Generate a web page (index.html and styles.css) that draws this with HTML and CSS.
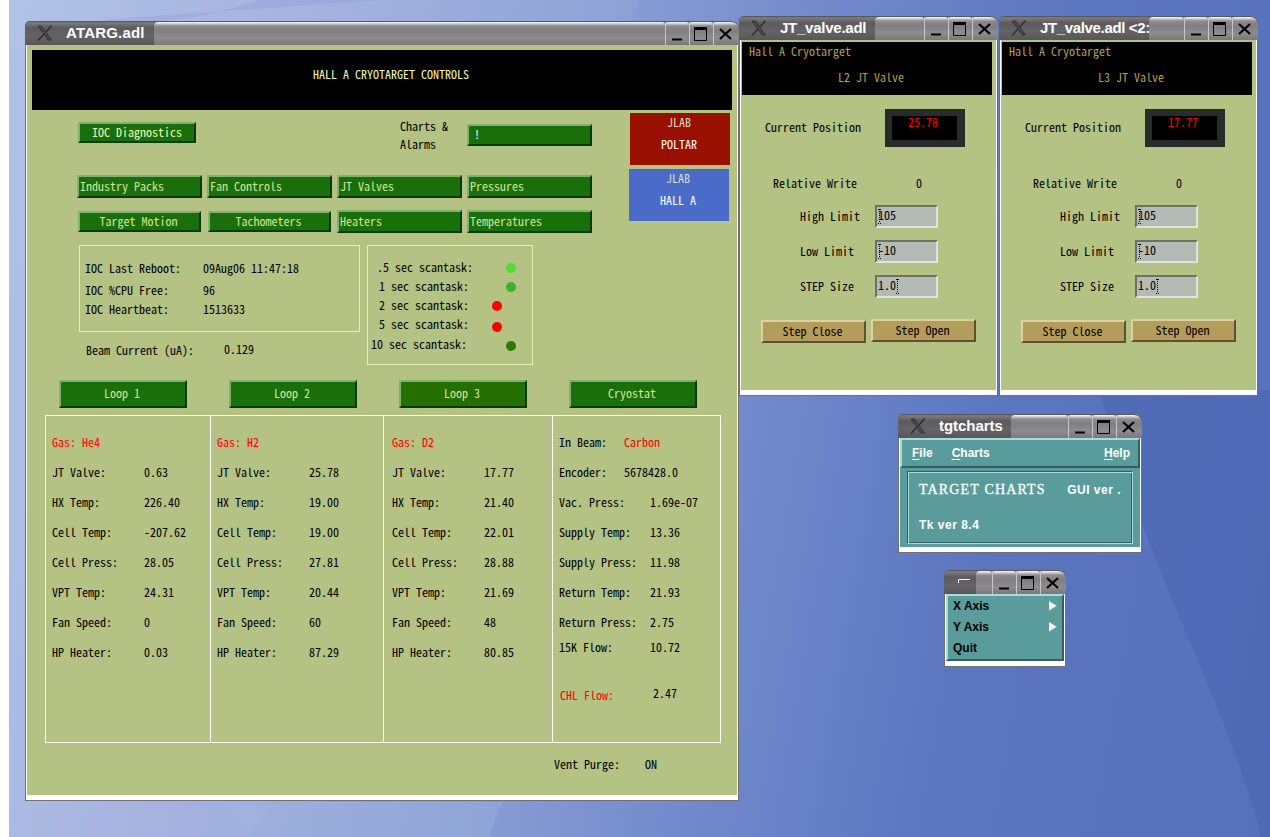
FILE: index.html
```html
<!DOCTYPE html>
<html lang="en">
<head>
    <meta charset="UTF-8">
    <title>Hall A Cryotarget Controls</title>
    <link rel="stylesheet" href="styles.css">
</head>
<body>
    <svg class="symbols" width="0" height="0">
        <symbol id="xlogo" viewBox="0 0 16 16">
            <path d="M1 1h3.500l10 14h-3.500z" fill="#4a484a" stroke="#2c2a2c" stroke-width=".7"/>
            <path d="M14.500 .5L9 7M7 9L1 15.500" stroke="#2c2a2c" stroke-width="1.300"/>
        </symbol>
        <symbol id="min" viewBox="0 0 23 23">
            <path d="M6 17.500h10" stroke="#000" stroke-width="2"/>
        </symbol>
        <symbol id="max" viewBox="0 0 23 23">
            <path d="M4.500 6v12.500h12V6" fill="none" stroke="#000"/>
            <path d="M4 6.500h13" stroke="#000" stroke-width="3"/>
        </symbol>
        <symbol id="close" viewBox="0 0 23 23">
            <path d="M5 7l11 10M16 7L5 17" stroke="#000" stroke-width="2.200"/>
        </symbol>
    </svg>

    <div class="desktop">
        <svg class="wallpaper" viewBox="0 0 1261 837" preserveAspectRatio="none">
            <path d="M630 0Q480 500 240 837H0V0z" fill="#c0c8f0" opacity=".12"/>
            <path d="M370 0H250Q160 30 90 20z" fill="#8890d0" opacity=".25"/>
            <path d="M494 802Q486 820 480 837H240L215 802z" fill="#a8bce4" opacity=".25"/>
            <path d="M1090 390Q1120 500 1180 640T1252 837H1261V390z" fill="#4058a4" opacity=".3"/>
        </svg>

        <!-- main screen -->
        <div class="window win-main">
            <div class="titlebar">
                <div class="title"><svg class="xlogo"><use href="#xlogo"/></svg>ATARG.adl</div>
                <div class="bar"></div>
                <svg class="wbtn"><use href="#min"/></svg>
                <svg class="wbtn"><use href="#max"/></svg>
                <svg class="wbtn last"><use href="#close"/></svg>
            </div>
            <div class="body">
                <div class="banner">HALL A CRYOTARGET CONTROLS</div>

                <div class="upper">
                    <div class="nav">
                        <div class="tools">
                            <div class="btn diag">IOC Diagnostics</div>
                            <div class="charts-label">Charts &amp;<br>Alarms</div>
                            <div class="btn alarm">!</div>
                        </div>
                        <div class="menus">
                            <div class="btn left">Industry Packs</div>
                            <div class="btn left">Fan Controls</div>
                            <div class="btn left">JT Valves</div>
                            <div class="btn left">Pressures</div>
                            <div class="btn small">Target Motion</div>
                            <div class="btn small">Tachometers</div>
                            <div class="btn left">Heaters</div>
                            <div class="btn left">Temperatures</div>
                        </div>
                    </div>
                    <div class="labs">
                        <div class="lab red"><span>JLAB</span>POLTAR</div>
                        <div class="lab blue"><span>JLAB</span>HALL A</div>
                    </div>
                </div>

                <div class="status">
                    <div>
                        <div class="box ioc">
                            <span>IOC Last Reboot:</span><span>09Aug06 11:47:18</span>
                            <span>IOC %CPU Free:</span><span>96</span>
                            <span>IOC Heartbeat:</span><span>1513633</span>
                        </div>
                        <div class="beam"><span>Beam Current (uA):</span><span>0.129</span></div>
                    </div>
                    <div class="box scan">
                        <div class="task half"><span>.5 sec scantask:</span><i class="dot bright"></i></div>
                        <div class="task"><span>1 sec scantask:</span><i class="dot mid"></i></div>
                        <div class="task"><span>2 sec scantask:</span><i class="dot bad"></i></div>
                        <div class="task tall"><span>5 sec scantask:</span><i class="dot bad"></i></div>
                        <div class="task tall ten"><span>10 sec scantask:</span><i class="dot dark"></i></div>
                    </div>
                </div>

                <div class="loops">
                    <div class="btn">Loop 1</div>
                    <div class="btn">Loop 2</div>
                    <div class="btn on">Loop 3</div>
                    <div class="btn">Cryostat</div>
                </div>

                <div class="table">
                    <div class="col">
                        <div class="row alert"><span>Gas: He4</span></div>
                        <div class="row"><span>JT Valve:</span>0.63</div>
                        <div class="row"><span>HX Temp:</span>226.40</div>
                        <div class="row"><span>Cell Temp:</span>-207.62</div>
                        <div class="row"><span>Cell Press:</span>28.05</div>
                        <div class="row"><span>VPT Temp:</span>24.31</div>
                        <div class="row"><span>Fan Speed:</span>0</div>
                        <div class="row"><span>HP Heater:</span>0.03</div>
                    </div>
                    <div class="col">
                        <div class="row alert"><span>Gas: H2</span></div>
                        <div class="row"><span>JT Valve:</span>25.78</div>
                        <div class="row"><span>HX Temp:</span>19.00</div>
                        <div class="row"><span>Cell Temp:</span>19.00</div>
                        <div class="row"><span>Cell Press:</span>27.81</div>
                        <div class="row"><span>VPT Temp:</span>20.44</div>
                        <div class="row"><span>Fan Speed:</span>60</div>
                        <div class="row"><span>HP Heater:</span>87.29</div>
                    </div>
                    <div class="col third">
                        <div class="row alert"><span>Gas: D2</span></div>
                        <div class="row"><span>JT Valve:</span>17.77</div>
                        <div class="row"><span>HX Temp:</span>21.40</div>
                        <div class="row"><span>Cell Temp:</span>22.01</div>
                        <div class="row"><span>Cell Press:</span>28.88</div>
                        <div class="row"><span>VPT Temp:</span>21.69</div>
                        <div class="row"><span>Fan Speed:</span>48</div>
                        <div class="row"><span>HP Heater:</span>80.85</div>
                    </div>
                    <div class="col cryo">
                        <div class="row near"><span>In Beam:</span><b>Carbon</b></div>
                        <div class="row near"><span>Encoder:</span>5678428.0</div>
                        <div class="row"><span>Vac. Press:</span>1.69e-07</div>
                        <div class="row"><span>Supply Temp:</span>13.36</div>
                        <div class="row"><span>Supply Press:</span>11.98</div>
                        <div class="row"><span>Return Temp:</span>21.93</div>
                        <div class="row"><span>Return Press:</span>2.75</div>
                        <div class="row flow"><span>15K Flow:</span>10.72</div>
                        <div class="row chl"><span>CHL Flow:</span><em>2.47</em></div>
                    </div>
                </div>

                <div class="vent"><span>Vent Purge:</span>ON</div>
            </div>
        </div>

        <!-- JT valve L2 -->
        <div class="window win-jt2">
            <div class="titlebar">
                <div class="title"><svg class="xlogo"><use href="#xlogo"/></svg>JT_valve.adl</div>
                <div class="bar"></div>
                <svg class="wbtn"><use href="#min"/></svg>
                <svg class="wbtn"><use href="#max"/></svg>
                <svg class="wbtn last"><use href="#close"/></svg>
            </div>
            <div class="body">
                <div class="head"><p>Hall A Cryotarget</p><p class="name">L2 JT Valve</p></div>
                <div class="position"><span>Current Position</span><div class="meter">25.78</div></div>
                <div class="write"><span>Relative Write</span>0</div>
                <div class="limits">
                    <span>High Limit</span><div class="field caret">105</div>
                    <span>Low Limit</span><div class="field caret">-10</div>
                    <span>STEP Size</span><div class="field caret end">1.0</div>
                </div>
                <div class="steps"><div class="gold">Step Close</div><div class="gold up">Step Open</div></div>
            </div>
        </div>

        <!-- JT valve L3 -->
        <div class="window win-jt3">
            <div class="titlebar">
                <div class="title"><svg class="xlogo"><use href="#xlogo"/></svg>JT_valve.adl &lt;2:</div>
                <div class="bar"></div>
                <svg class="wbtn"><use href="#min"/></svg>
                <svg class="wbtn"><use href="#max"/></svg>
                <svg class="wbtn last"><use href="#close"/></svg>
            </div>
            <div class="body">
                <div class="head"><p>Hall A Cryotarget</p><p class="name">L3 JT Valve</p></div>
                <div class="position"><span>Current Position</span><div class="meter">17.77</div></div>
                <div class="write"><span>Relative Write</span>0</div>
                <div class="limits">
                    <span>High Limit</span><div class="field caret">105</div>
                    <span>Low Limit</span><div class="field caret">-10</div>
                    <span>STEP Size</span><div class="field caret end">1.0</div>
                </div>
                <div class="steps"><div class="gold">Step Close</div><div class="gold up">Step Open</div></div>
            </div>
        </div>

        <!-- charts launcher -->
        <div class="window win-charts">
            <div class="titlebar">
                <div class="title"><svg class="xlogo"><use href="#xlogo"/></svg>tgtcharts</div>
                <div class="bar"></div>
                <svg class="wbtn"><use href="#min"/></svg>
                <svg class="wbtn"><use href="#max"/></svg>
                <svg class="wbtn last"><use href="#close"/></svg>
            </div>
            <div class="body teal">
                <div class="menubar">
                    <span><u>F</u>ile</span><span><u>C</u>harts</span><span class="help"><u>H</u>elp</span>
                </div>
                <div class="frame">
                    <div class="first"><span class="serif">TARGET CHARTS</span><span class="ver">GUI ver .</span></div>
                    <div class="ver">Tk ver 8.4</div>
                </div>
            </div>
        </div>

        <!-- torn-off menu -->
        <div class="window win-menu">
            <div class="titlebar">
                <div class="title"><svg width="12" height="4"><path d="M.5 4V.5H12" fill="none" stroke="#fff"/></svg></div>
                <div class="bar"></div>
                <svg class="wbtn"><use href="#min"/></svg>
                <svg class="wbtn"><use href="#max"/></svg>
                <svg class="wbtn last"><use href="#close"/></svg>
            </div>
            <div class="body teal popup">
                <div class="item">X Axis<svg width="8" height="10"><path d="M0 0l8 5-8 5z" fill="#f4f4f4"/><path d="M0 10l8-5" stroke="#909898"/></svg></div>
                <div class="item">Y Axis<svg width="8" height="10"><path d="M0 0l8 5-8 5z" fill="#f4f4f4"/><path d="M0 10l8-5" stroke="#909898"/></svg></div>
                <div class="item">Quit</div>
            </div>
        </div>
    </div>
</body>
</html>
```
FILE: styles.css
```css
* {
    box-sizing: border-box;
}

body {
    margin: 0;
    background: #fff;
    font-family: "Noto Sans CJK JP", "Liberation Mono", monospace;
    font-feature-settings: "hwid";
    font-size: 12px;
    line-height: 12px;
    color: #000;
    white-space: nowrap;
    overflow: hidden;
}

.symbols {
    position: absolute;
}

p {
    margin: 0;
}

/* desktop */
.desktop {
    position: relative;
    margin-left: 9px;
    height: 837px;
    background: linear-gradient(100deg, #b0c2e6 0%, #a2b0de 22%, #8a9fd6 42%, #728acc 58%, #5b76c0 76%, #5670bc 100%);
}

.wallpaper {
    width: 100%;
    height: 100%;
    display: block;
}

/* windows */
.window {
    position: absolute;
    display: flex;
    flex-direction: column;
    background: #fff;
    border: 1px solid #707070;
    border-top: 0;
    border-radius: 5px 8px 0 0;
}

.win-main { left: 16px; top: 21px; width: 714px; height: 780px; }
.win-jt2 { left: 730px; top: 16px; width: 259px; height: 380px; }
.win-jt3 { left: 990px; top: 16px; width: 259px; height: 380px; }
.win-charts { left: 889px; top: 414px; width: 244px; height: 139px; }
.win-menu { left: 935px; top: 570px; width: 122px; height: 97px; }

.titlebar {
    display: flex;
    flex: none;
    height: 24px;
    margin: 0 -1px;
    border-radius: 5px 8px 0 0;
    overflow: hidden;
    background: #6a686a;
    border-top: 1px solid #5a585a;
}

.title {
    display: flex;
    align-items: center;
    flex: none;
    width: 129px;
    padding: 0 0 2px 12px;
    overflow: hidden;
    font: bold 15px/20px "Liberation Sans", sans-serif;
    font-feature-settings: normal;
    letter-spacing: .2px;
    color: #fff;
    background: linear-gradient(#7c7a7c 0, #5c5a5c 5px, #656365 60%, #585658);
    border-top: 1px solid #777;
}

.win-jt2 .title { width: 136px; letter-spacing: -.25px; }
.win-jt3 .title { width: 150px; letter-spacing: -.35px; }
.win-charts .title { width: 113px; letter-spacing: -.05px; }
.win-menu .title { width: 32px; padding: 0 0 5px 14px; }

.xlogo {
    flex: none;
    width: 16px;
    height: 16px;
    margin-right: 13px;
}

.bar {
    flex: 1;
    border-radius: 4px 3px 0 0;
}

.bar,
.wbtn {
    background: linear-gradient(#fff 0, #c4c4c4 2px, #8e8c8e 4px, #807e80 9px, #8e8c8e 16px, #7a787a);
}

.wbtn {
    flex: none;
    width: 24px;
    height: 24px;
    margin-top: -1px;
    border-left: 1px solid #c8c8c8;
    border-radius: 3px 3px 0 0;
    border-top: 1px solid #666;
}

.wbtn use {
    width: 23px;
    height: 23px;
}

.wbtn.last {
    width: 26px;
    border-radius: 3px 8px 0 0;
}

.body {
    flex: 1;
    margin: 0 1px 5px;
    background: #b4c284;
}

/* main window */
.banner {
    height: 60px;
    margin: 5px 5px 0;
    padding: 18px 0 0 281px;
    background: #000;
    color: #f0f8b4;
}

.upper {
    display: flex;
    height: 135px;
}

.nav {
    width: 602px;
}

.tools {
    display: flex;
    align-items: flex-start;
    height: 65px;
    padding: 12px 0 0 51px;
}

.btn {
    display: flex;
    align-items: center;
    justify-content: center;
    height: 23px;
    padding-bottom: 1px;
    background: #19700a;
    color: #d4e496;
    border: 2px solid;
    border-color: #82b072 #0a3806 #0a3806 #82b072;
}

.diag {
    width: 118px;
    height: 21px;
    color: #f0f8b4;
}

.charts-label {
    width: 67px;
    margin: -5px 0 0 204px;
    line-height: 18px;
}

.alarm {
    width: 125px;
    height: 22px;
    margin-top: 2px;
    justify-content: flex-start;
    padding: 0 0 3px 5px;
    color: #fff;
}

.menus {
    display: grid;
    grid-template-columns: repeat(4, 125px);
    gap: 12px 5px;
    padding-left: 50px;
}

.btn.left {
    justify-content: flex-start;
    padding-left: 1px;
}

.btn.small {
    height: 21px;
    margin: 1px 1px;
    padding-right: 2px;
}

.labs {
    padding-top: 3px;
}

.lab {
    display: flex;
    flex-direction: column;
    align-items: center;
    width: 100px;
    height: 52px;
    padding: 3px 2px 0 0;
    margin-bottom: 4px;
    color: #fff;
}

.lab span {
    margin-bottom: 10px;
    color: #d8dccc;
}

.lab.red {
    margin-left: 1px;
    background: #9a1000;
}

.lab.blue {
    background: #4a6cc8;
}

.status {
    display: flex;
    gap: 7px;
    height: 135px;
    padding-left: 52px;
}

.box {
    border: 1px solid #e4f0b0;
}

.ioc {
    display: grid;
    grid-template-columns: 118px auto;
    grid-template-rows: 22px 22px 16px;
    align-items: center;
    align-content: start;
    width: 281px;
    height: 87px;
    padding: 11px 0 0 5px;
}

.beam {
    display: flex;
    padding: 12px 0 0 7px;
}

.beam span:first-child {
    width: 138px;
}

.beam span + span {
    margin-top: -1px;
}

.scan {
    width: 166px;
    height: 120px;
    padding-top: 12px;
}

.task {
    display: flex;
    align-items: center;
    height: 19px;
    padding-left: 11px;
}

.task.tall { height: 20px; }
.task.half { padding-left: 9px; }
.task.ten { padding-left: 3px; }

.task span {
    width: 127px;
    margin-top: -2px;
}

.task.half span { width: 129px; }
.task.ten span { width: 135px; }

.dot {
    width: 10px;
    height: 10px;
    margin-top: 1px;
    border-radius: 50%;
}

.dot.bright { background: #52dc3a; }
.dot.mid { background: #3ab422; }
.dot.dark { background: #2a7c04; }

.dot.bad {
    margin-left: -14px;
    background: #ff0000;
}

.tall .dot.bad {
    margin-top: 3px;
}

.loops {
    display: flex;
    gap: 42px;
    height: 35px;
    padding-left: 32px;
}

.loops .btn {
    width: 128px;
    height: 28px;
    padding: 0 2px 3px 0;
}

.loops .on {
    background: #256e00;
}

.table {
    display: grid;
    grid-template-columns: 164px 173px 169px 168px;
    width: 676px;
    height: 328px;
    margin-left: 18px;
    border: 1px solid #fff;
}

.col {
    padding: 11px 0 0 6px;
}

.col + .col {
    border-left: 1px solid #fff;
}

.col.third {
    padding-left: 8px;
}

.row {
    display: flex;
    align-items: center;
    height: 30px;
}

.row span {
    width: 92px;
}

.row b,
.alert,
.chl span {
    font-weight: normal;
    color: #f00;
}

.cryo .row span { width: 91px; }
.cryo .near span { width: 65px; }

.cryo .flow {
    height: 20px;
}

.cryo .chl {
    height: 20px;
    margin-top: 28px;
    padding-left: 1px;
}

.chl em {
    margin: -4px 0 0 2px;
    font-style: normal;
}

.vent {
    display: flex;
    padding: 15px 0 0 527px;
}

.vent span {
    width: 91px;
}

/* JT valve windows */
.head {
    width: 250px;
    height: 53px;
    margin: 2px 0 0 1px;
    padding: 3px 0 0 7px;
    background: #000;
    color: #b49c5a;
}

.head .name {
    padding: 14px 0 0 89px;
}

.position {
    display: flex;
    align-items: center;
    height: 38px;
    margin-top: 14px;
    padding-left: 24px;
}

.position span {
    width: 120px;
    margin-top: -2px;
}

.meter {
    width: 80px;
    height: 38px;
    border: 7px solid #2a2c2a;
    border-right-width: 8px;
    padding-left: 16px;
    background: #000;
    color: #f00;
}

.write {
    display: flex;
    padding: 30px 0 0 32px;
}

.write span {
    width: 143px;
}

.limits {
    display: grid;
    grid-template-columns: 75px 63px;
    gap: 12px 0;
    align-items: center;
    padding: 16px 0 0 59px;
}

.limits span {
    margin-top: -1px;
}

.field {
    position: relative;
    height: 23px;
    padding: 2px 0 0 1px;
    background: #b4bab4;
    border: 2px solid;
    border-color: #6b706b #dfe3df #dfe3df #6b706b;
}

/* I-beam cursor laid over the digits */
.caret::before,
.caret::after {
    content: "";
    position: absolute;
    top: 2px;
    height: 13px;
}

.caret::after {
    left: 2px;
    border-left: 1px dotted #000;
}

.caret::before {
    left: 1px;
    width: 3px;
    border: dotted #000;
    border-width: 1px 0;
}

.caret.end::before { left: 19px; }
.caret.end::after { left: 20px; }

.steps {
    display: flex;
    gap: 5px;
    padding: 22px 0 0 20px;
}

.gold {
    width: 105px;
    height: 23px;
    padding: 3px 2px 0 0;
    text-align: center;
    background: #b49c5a;
    border: 2px solid;
    border-color: #ddd2a4 #5e5030 #5e5030 #ddd2a4;
}

.gold.up {
    margin-top: -1px;
}

/* tk windows */
.teal {
    background: #5a9c9c;
    font: bold 12px/14px "Liberation Sans", sans-serif;
    font-feature-settings: normal;
    color: #fff;
}

.menubar {
    display: flex;
    gap: 19px;
    height: 30px;
    padding: 6px 8px 0 10px;
    border: 2px solid;
    border-color: #a8dcdc #345c64 #345c64 #a8dcdc;
}

.help {
    margin-left: auto;
}

.menubar u {
    text-underline-offset: 2px;
}

.frame {
    height: 73px;
    margin: 3px 7px 0;
    padding: 10px 10px;
    border: 1px solid;
    border-color: #345c64 #a8dcdc #a8dcdc #345c64;
    box-shadow: inset 1px 1px #a8dcdc, inset -1px -1px #345c64;
}

.frame .first {
    display: flex;
    justify-content: space-between;
    height: 16px;
    margin-bottom: 20px;
    padding: 0 1px;
}

.first .ver {
    padding-top: 1px;
}

.ver {
    padding-left: 1px;
    letter-spacing: .5px;
}

.serif {
    font: 14px/16px "Liberation Serif", serif;
    letter-spacing: 1.15px;
    -webkit-text-stroke: .3px #fff;
}

.popup {
    color: #000;
    border: 2px solid;
    border-color: #a8dcdc #345c64 #345c64 #a8dcdc;
}

.item {
    display: flex;
    align-items: center;
    justify-content: space-between;
    height: 21px;
    padding: 0 5px 2px;
}
```
